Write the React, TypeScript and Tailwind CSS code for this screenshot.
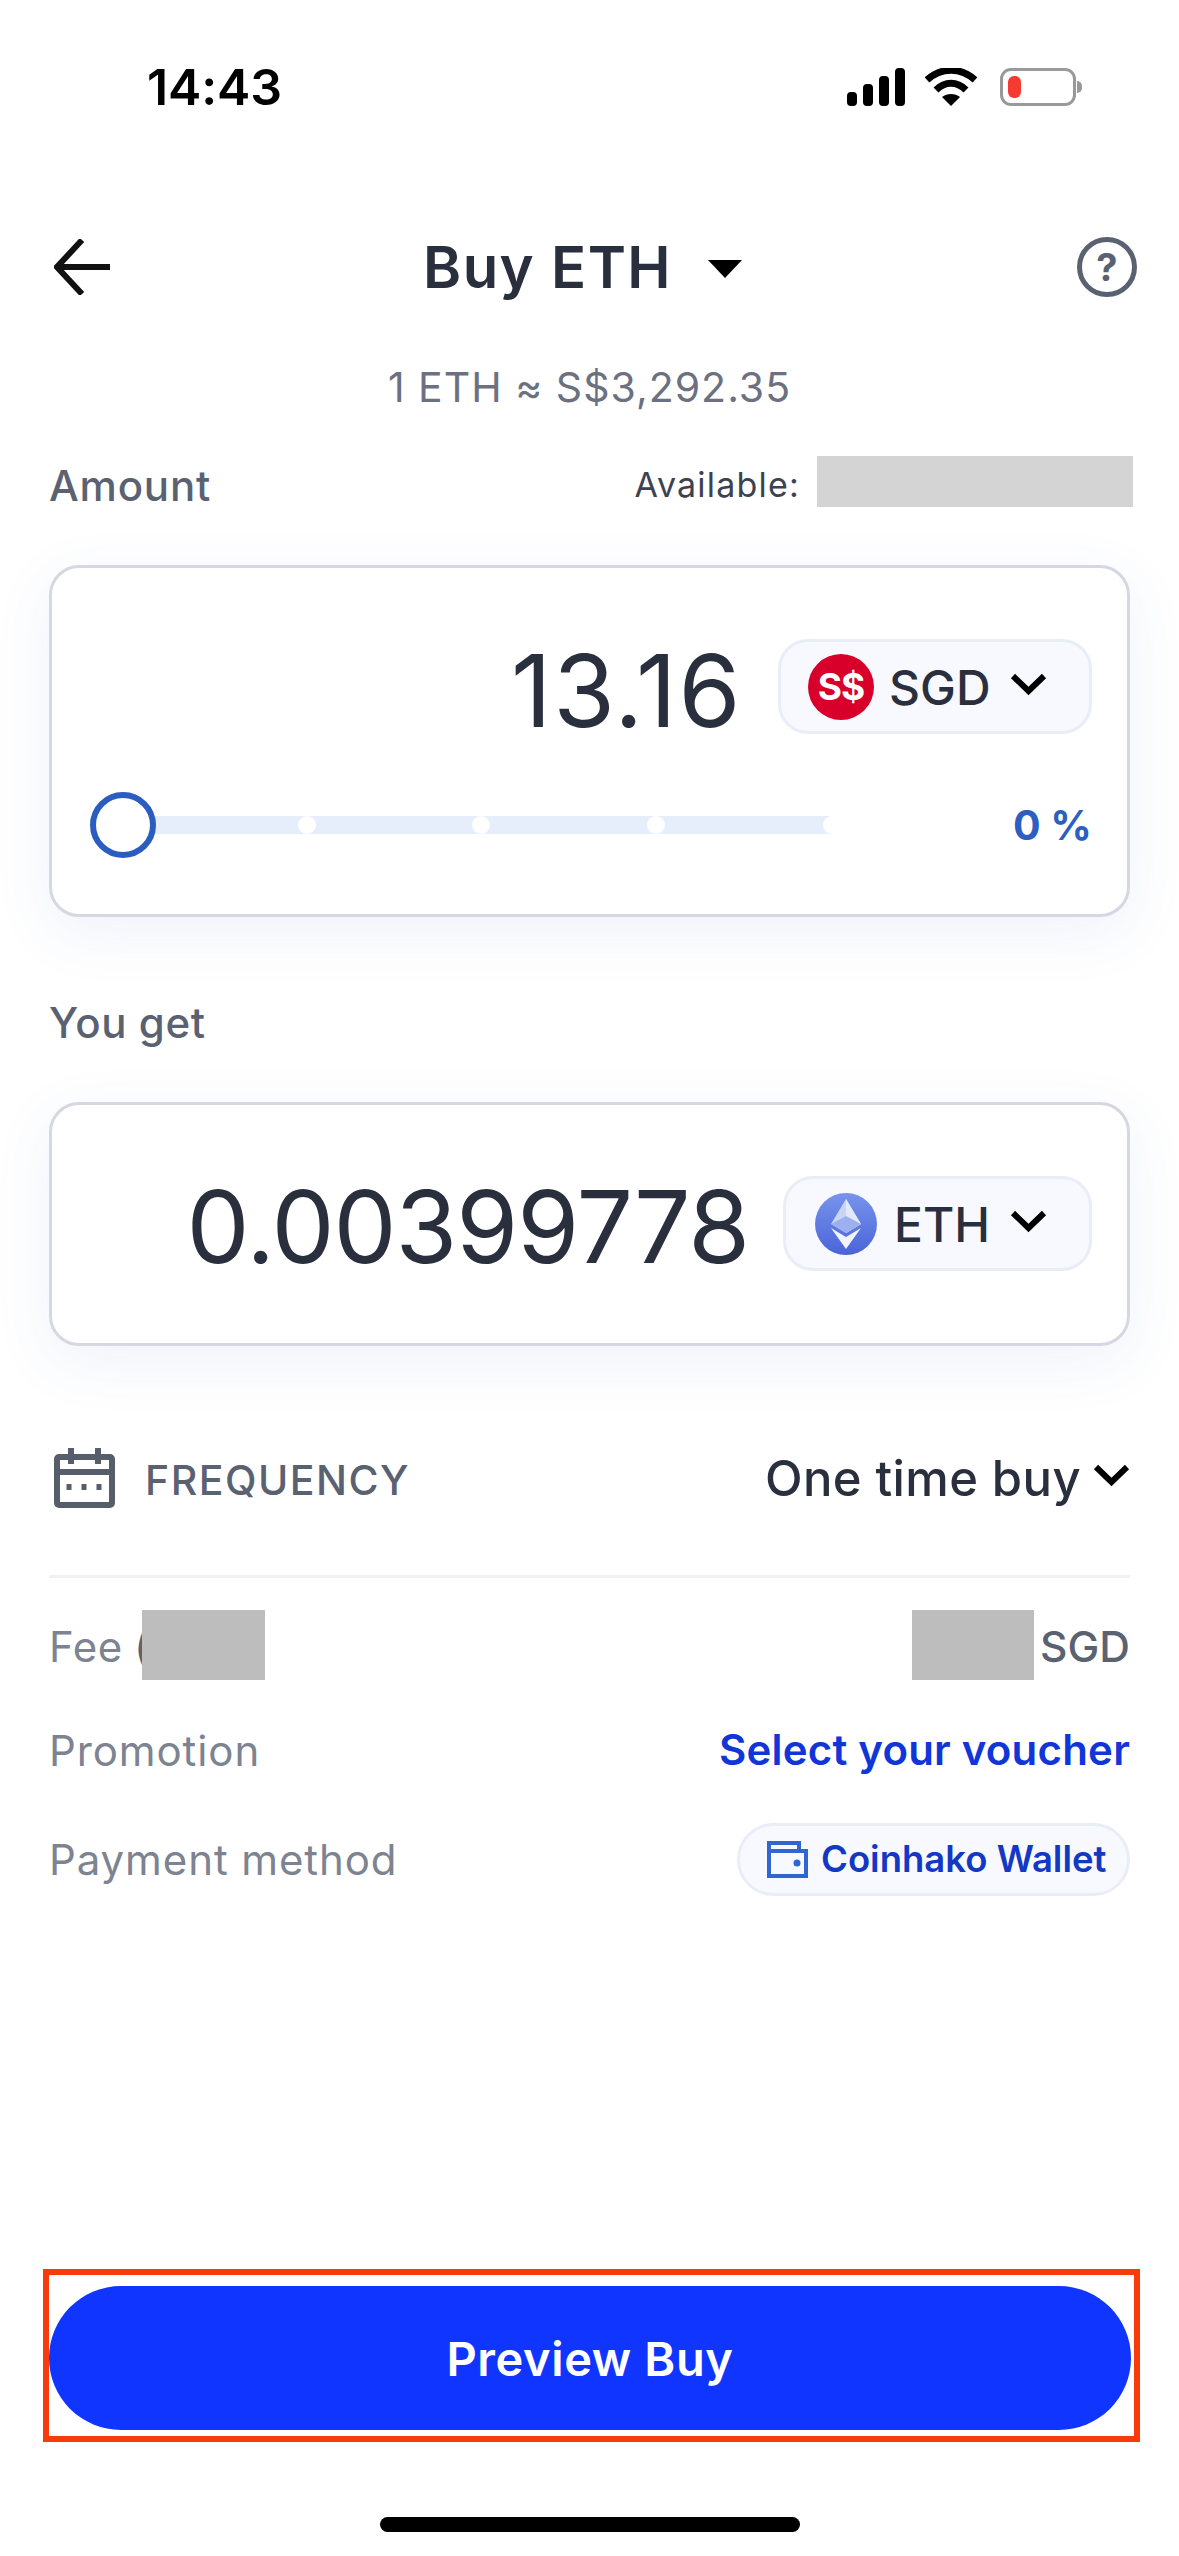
const INK = "text-[#2a2f3d]";

function Chevron({ className = "" }: { className?: string }) {
  return (
    <svg viewBox="0 0 37 24" className={`w-[37px] h-[24px] shrink-0 ${className}`} fill="none">
      <path d="M3 4 L18.5 19 L34 4" stroke="#000" strokeWidth="6" />
    </svg>
  );
}

function StatusBar() {
  return (
    <div className="h-[174px] flex items-center justify-between pl-[147px] pr-[97px]">
      <span className="text-[50px] font-semibold text-black leading-none tracking-[-0.1px]">14:43</span>
      <div className="flex items-center gap-[20px]">
        <svg viewBox="0 0 60 38" className="w-[60px] h-[38px]" fill="#000">
          <rect x="0" y="24" width="10" height="14" rx="4" />
          <rect x="16" y="16" width="10" height="22" rx="4" />
          <rect x="32" y="8" width="10" height="30" rx="4" />
          <rect x="48" y="0" width="10" height="38" rx="4" />
        </svg>
        <svg viewBox="0 0 52 38" className="w-[52px] h-[38px] -ml-[2px]" fill="none">
          <path d="M2 12 C16 -1 36 -1 50 12" stroke="#000" strokeWidth="7" />
          <path d="M11 22 C20 13 32 13 41 22" stroke="#000" strokeWidth="7" />
          <path d="M26 38 L17 29 C22 25 30 25 35 29 Z" fill="#000" />
        </svg>
        <div className="flex items-center ml-[3px]">
          <div className="w-[76px] h-[38px] border-[3px] border-[#999999] rounded-[11px] p-[5px]">
            <div className="w-[13px] h-full bg-[#f53b30] rounded-[6px]" />
          </div>
          <div className="w-[5px] h-[12px] bg-[#999999] rounded-r-[5px] ml-[1px]" />
        </div>
      </div>
    </div>
  );
}

function NavBar() {
  return (
    <div className="h-[186px] flex items-center justify-between pl-[54px] pr-[42px]">
      <svg viewBox="0 0 56 56" className="w-[56px] h-[56px]" fill="none">
        <path d="M56 28 H4 M28 1 L3 28 L28 55" stroke="#111" strokeWidth="6" />
      </svg>
      <div className="flex items-center gap-[36px] mr-[22px]">
        <span className={`text-[58px] font-semibold leading-none tracking-[1.4px] ${INK}`}>Buy ETH</span>
        <div className="w-0 h-0 border-l-[17px] border-r-[17px] border-t-[18px] border-l-transparent border-r-transparent border-t-black mt-[4px]" />
      </div>
      <div className="w-[60px] h-[60px] rounded-full border-[5px] border-[#5a6271] flex items-center justify-center text-[38px] font-bold text-[#5a6271] leading-none">
        ?
      </div>
    </div>
  );
}

function CoinPill({ w, children, label }: { w: string; children: React.ReactNode; label: string }) {
  return (
    <div className={`${w} h-[95px] shrink-0 flex items-center rounded-[30px] border-[3px] border-[#e9edf8] bg-[#f7f9ff]`}>
      {children}
      <span className={`text-[48px] font-medium leading-none mt-[3px] ${INK}`}>{label}</span>
      <Chevron className="ml-auto mr-[42px] -mt-[6px]" />
    </div>
  );
}

function AmountCard() {
  return (
    <div className="mx-[49px] mt-[50px] h-[352px] rounded-[30px] border-[3px] border-[#d5d8e3] bg-white shadow-[0_16px_60px_rgba(70,90,190,0.08)] pt-[71px] pr-[35px] pl-[38px]">
      <div className="flex items-start justify-end gap-[36px]">
        <span className={`mt-[2px] text-[100px] leading-none tracking-[1.6px] ${INK}`}>13.16</span>
        <CoinPill w="w-[314px]" label="SGD">
          <div className="ml-[27px] mr-[15px] w-[66px] h-[66px] rounded-full bg-[#d8002a] flex items-center justify-center text-[37px] font-bold text-white leading-none tracking-[-1px]">
            S$
          </div>
        </CoinPill>
      </div>
      <div className="flex items-center mt-[51px]">
        <div className="relative w-[745px] h-[66px] flex items-center">
          <div className="absolute left-[60px] w-[681px] h-[18px] bg-[#e6edfb]" />
          <div className="absolute left-[208px] w-[18px] h-[18px] rounded-full bg-white" />
          <div className="absolute left-[382px] w-[18px] h-[18px] rounded-full bg-white" />
          <div className="absolute left-[557px] w-[18px] h-[18px] rounded-full bg-white" />
          <div className="absolute left-[733px] w-[18px] h-[18px] rounded-full bg-white" />
          <div className="absolute left-0 w-[66px] h-[66px] rounded-full border-[6px] border-[#2b5dc0] bg-white" />
        </div>
        <span className="ml-auto text-[41px] font-bold text-[#2c5fbf] leading-none">0 %</span>
      </div>
    </div>
  );
}

function GetCard() {
  return (
    <div className="mx-[49px] mt-[49px] h-[244px] rounded-[30px] border-[3px] border-[#d5d8e3] bg-white shadow-[0_16px_60px_rgba(70,90,190,0.08)] pt-[71px] pr-[35px]">
      <div className="flex items-start justify-end gap-[34px]">
        <span className={`mt-[1px] text-[100px] leading-none tracking-[-1px] ${INK}`}>0.00399778</span>
        <CoinPill w="w-[309px]" label="ETH">
          <svg viewBox="0 0 62 62" className="w-[62px] h-[62px] ml-[29px] mr-[17px] shrink-0">
            <defs>
              <linearGradient id="ethCoin" x1="0" y1="0" x2="0" y2="1">
                <stop offset="0" stopColor="#7894ec" />
                <stop offset="1" stopColor="#4a64d8" />
              </linearGradient>
            </defs>
            <circle cx="31" cy="31" r="31" fill="url(#ethCoin)" />
            <path d="M31 6 L16 31 L31 40 L46 31 Z" fill="#c9d5f7" />
            <path d="M31 6 L31 40 L46 31 Z" fill="#e3e9fb" />
            <path d="M31 23 L16 31 L31 40 L46 31 Z" fill="#9cb0ee" />
            <path d="M16 35 L31 56 L46 35 L31 44 Z" fill="#f1f4fd" />
          </svg>
        </CoinPill>
      </div>
    </div>
  );
}

function FrequencyRow() {
  return (
    <div className="mx-[49px] mt-[92px] h-[80px] flex items-center">
      <svg viewBox="0 0 61 60" className="w-[61px] h-[60px] ml-[5px]" fill="none" stroke="#565d6b" strokeWidth="6">
        <rect x="3" y="9" width="55" height="48" rx="2" />
        <path d="M3 24 H58" />
        <path d="M17 0 V16 M44 0 V16" />
        <path d="M15 36 V42 M30 36 V42 M45 36 V42" strokeWidth="5" />
      </svg>
      <span className="ml-[30px] mt-[5px] text-[41px] font-medium text-[#5a6271] leading-none tracking-[1.5px]">FREQUENCY</span>
      <span className={`ml-auto text-[49px] font-medium leading-none tracking-[0.4px] ${INK}`}>One time buy</span>
      <Chevron className="ml-[12px] -mt-[6px]" />
    </div>
  );
}

function Details() {
  return (
    <div className="mx-[49px] text-[42px] leading-none text-[#7d8391]">
      <div className="mt-[32px] h-[70px] flex items-center">
        <span className="tracking-[0.6px] pt-[4px]">Fee</span>
        <span className="ml-[11px] pt-[4px] text-[#5a6271]">(</span>
        <div className="-ml-[7px] z-10 w-[123px] h-[70px] bg-[#bdbdbd]" />
        <div className="ml-auto w-[122px] h-[70px] bg-[#bdbdbd]" />
        <span className="ml-[6px] pt-[4px] font-medium text-[#5a6271] text-[42.5px]">SGD</span>
      </div>
      <div className="mt-[36px] h-[70px] flex items-center justify-between">
        <span className="tracking-[0.9px]">Promotion</span>
        <span className="text-[42px] font-semibold text-[#1035d8] tracking-[0.2px] -mt-[2px]">Select your voucher</span>
      </div>
      <div className="mt-[37px] h-[73px] flex items-center justify-between">
        <span className="tracking-[0.9px]">Payment method</span>
        <div className="w-[393px] h-[73px] flex items-center rounded-full border-[3px] border-[#e9edf8] bg-[#f7f9ff]">
          <svg viewBox="0 0 41 37" className="w-[41px] h-[37px] ml-[27px]" fill="none" stroke="#2f66d0" strokeWidth="4">
            <path d="M2 7 V35 H39 V10 H2" />
            <path d="M2 10 V2 H32 V10" />
            <circle cx="30" cy="22" r="1.5" fill="#2f66d0" />
          </svg>
          <span className="ml-[13px] text-[36.5px] font-semibold text-[#1338c4]">Coinhako Wallet</span>
        </div>
      </div>
    </div>
  );
}

export default function App() {
  return (
    <div className="w-[1179px] h-[2556px] bg-white flex flex-col font-['Inter',sans-serif] overflow-hidden">
      <StatusBar />
      <NavBar />
      <div className="h-[54px] flex items-center justify-center text-[41px] text-[#6b7180] leading-none tracking-[1px]">
        1 ETH ≈ S$3,292.35
      </div>
      <div className="mt-[41px] h-[60px] pl-[49px] pr-[46px] flex items-center">
        <span className="mt-[2px] text-[42px] font-medium text-[#5a6271] leading-none tracking-[0.8px]">Amount</span>
        <span className="ml-auto text-[34px] text-[#3c4250] leading-none tracking-[1.2px]">Available:</span>
        <div className="ml-[17px] w-[316px] h-[51px] bg-[#d4d4d4] -mt-[8px]" />
      </div>
      <AmountCard />
      <div className="mt-[76px] h-[60px] pl-[49px] flex items-center text-[42px] font-medium text-[#5a6271] leading-none tracking-[0.6px]">
        You get
      </div>
      <GetCard />
      <FrequencyRow />
      <div className="mx-[49px] mt-[57px] h-[3px] bg-[#f0f1f5]" />
      <Details />
      <div className="mt-auto ml-[43px] w-[1097px] h-[173px] border-[6px] border-[#f83a0d] pt-[11px] pr-[3px] pb-[6px]">
        <div className="h-[144px] rounded-full bg-[#0f35ff] flex items-center justify-center text-[47px] font-semibold text-white leading-none tracking-[0.6px]">
          Preview Buy
        </div>
      </div>
      <div className="mt-[75px] mb-[24px] mx-auto w-[420px] h-[15px] rounded-full bg-black" />
    </div>
  );
}
